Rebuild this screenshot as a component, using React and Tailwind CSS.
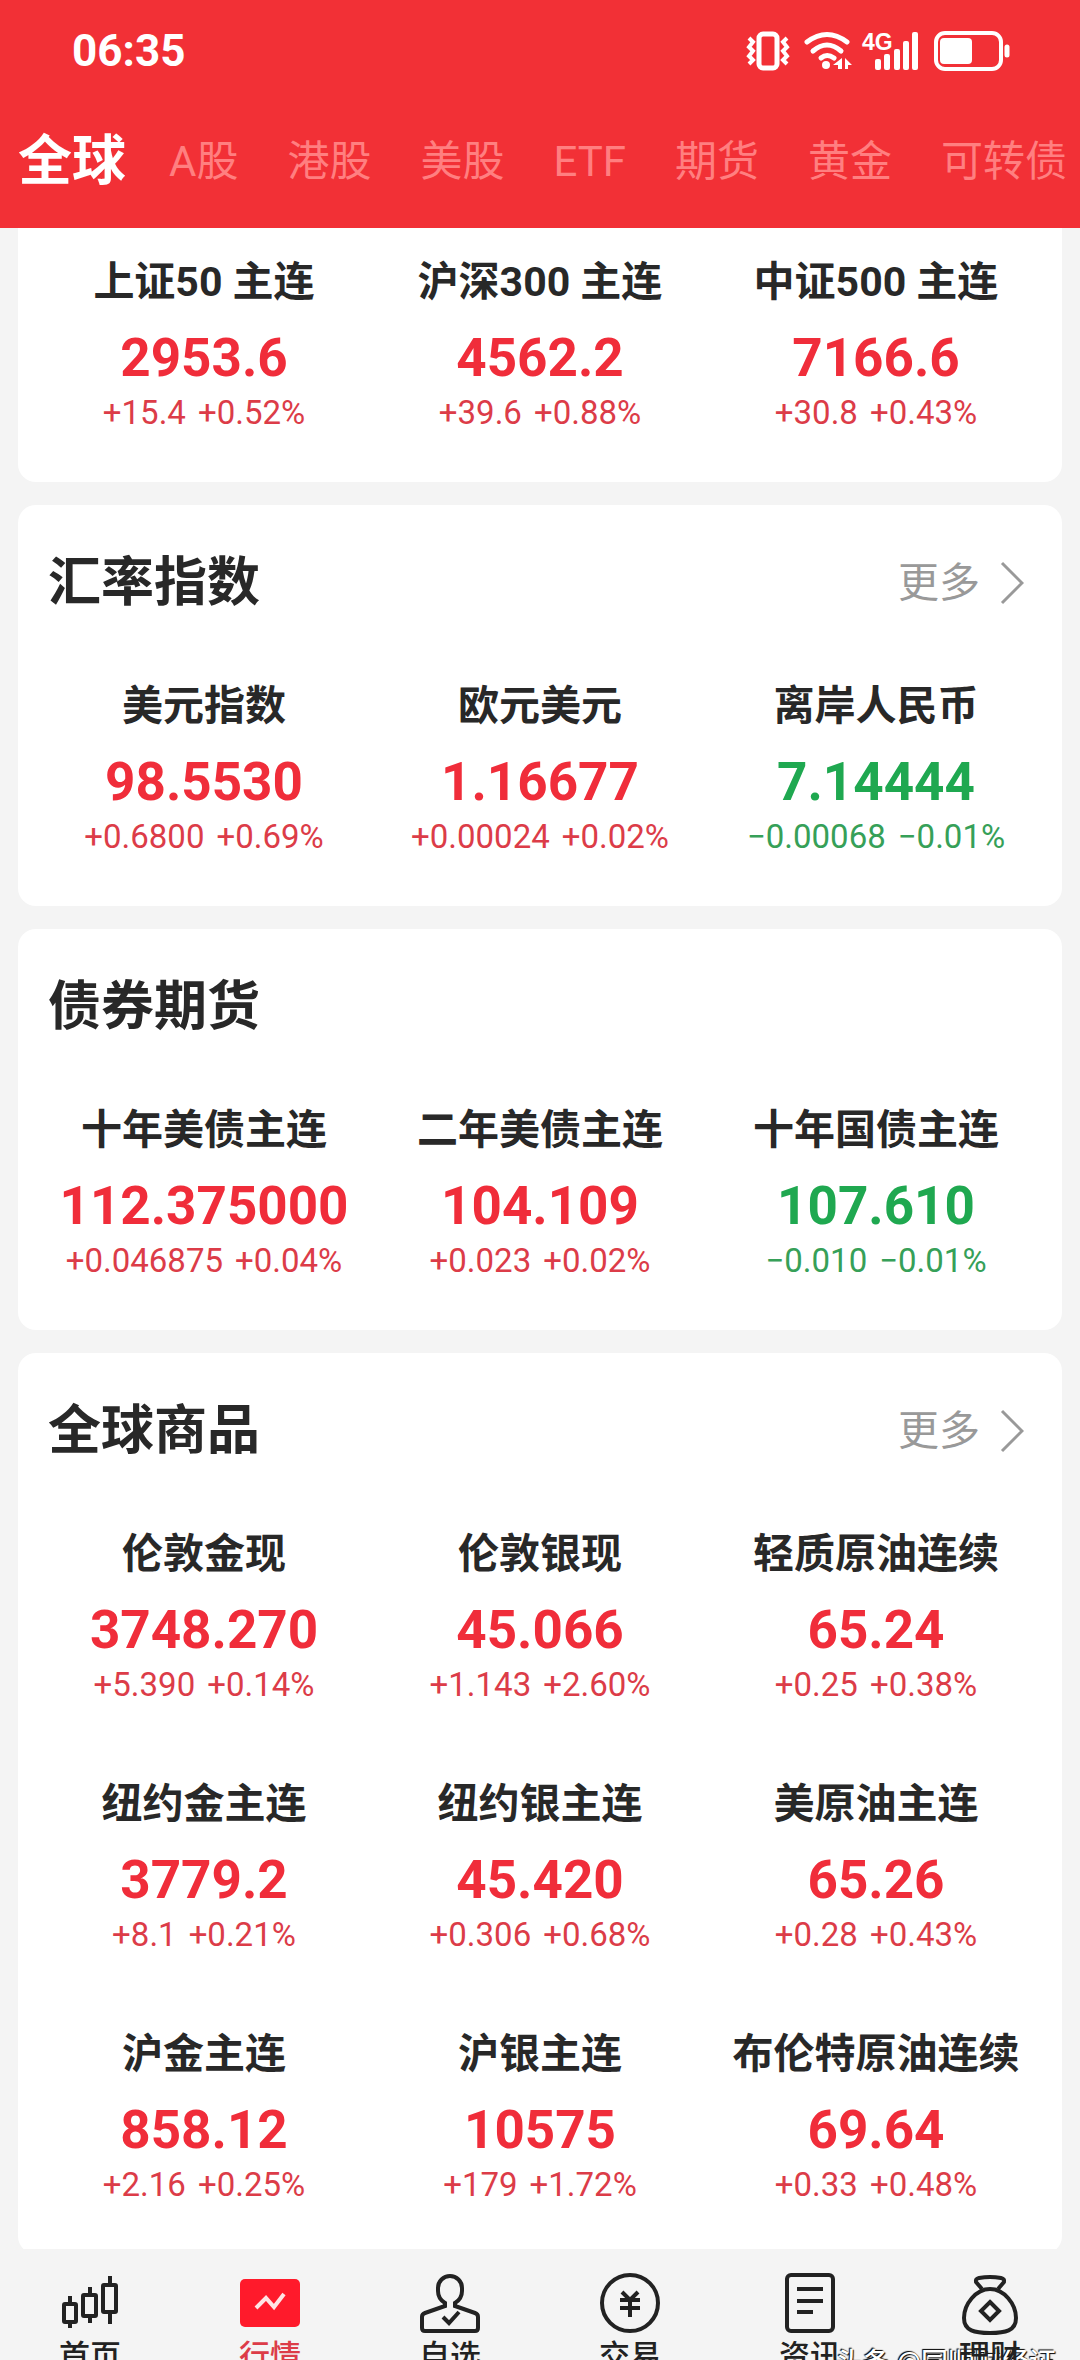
import { clsx } from "clsx";

const tabs = ["全球", "A股", "港股", "美股", "ETF", "期货", "黄金", "可转债"];

const sections = [
    {
        items: [
            { name: "上证50 主连", price: "2953.6", change: "+15.4", percent: "+0.52%" },
            { name: "沪深300 主连", price: "4562.2", change: "+39.6", percent: "+0.88%" },
            { name: "中证500 主连", price: "7166.6", change: "+30.8", percent: "+0.43%" },
        ],
    },
    {
        title: "汇率指数",
        more: true,
        items: [
            { name: "美元指数", price: "98.5530", change: "+0.6800", percent: "+0.69%" },
            { name: "欧元美元", price: "1.16677", change: "+0.00024", percent: "+0.02%" },
            { name: "离岸人民币", price: "7.14444", change: "−0.00068", percent: "−0.01%" },
        ],
    },
    {
        title: "债券期货",
        items: [
            { name: "十年美债主连", price: "112.375000", change: "+0.046875", percent: "+0.04%" },
            { name: "二年美债主连", price: "104.109", change: "+0.023", percent: "+0.02%" },
            { name: "十年国债主连", price: "107.610", change: "−0.010", percent: "−0.01%" },
        ],
    },
    {
        title: "全球商品",
        more: true,
        items: [
            { name: "伦敦金现", price: "3748.270", change: "+5.390", percent: "+0.14%" },
            { name: "伦敦银现", price: "45.066", change: "+1.143", percent: "+2.60%" },
            { name: "轻质原油连续", price: "65.24", change: "+0.25", percent: "+0.38%" },
            { name: "纽约金主连", price: "3779.2", change: "+8.1", percent: "+0.21%" },
            { name: "纽约银主连", price: "45.420", change: "+0.306", percent: "+0.68%" },
            { name: "美原油主连", price: "65.26", change: "+0.28", percent: "+0.43%" },
            { name: "沪金主连", price: "858.12", change: "+2.16", percent: "+0.25%" },
            { name: "沪银主连", price: "10575", change: "+179", percent: "+1.72%" },
            { name: "布伦特原油连续", price: "69.64", change: "+0.33", percent: "+0.48%" },
        ],
    },
];

const StatusBar = () => (
    <div className="flex items-center justify-between pl-[72px] pr-[70px] pt-[21px]">
        <span className="text-[44px] leading-[60px] font-bold">06:35</span>
        <div className="flex items-center gap-3">
            {/* Vibrate */}
            <svg width="46" height="40" viewBox="0 0 46 40" fill="none" stroke="currentColor">
                <rect x="13" y="3" width="18" height="34" rx="4" strokeWidth="5" />
                <path d="M3 7l4 4-4 5 4 4-4 5 4 4-4 4" strokeWidth="4" />
                <path d="M41 7l-4 4 4 5-4 4 4 5-4 4 4 4" strokeWidth="4" />
            </svg>
            {/* Wifi */}
            <svg width="46" height="40" viewBox="0 0 46 40" fill="none" stroke="currentColor" strokeWidth="5" strokeLinecap="round" className="overflow-visible">
                <path d="M3 11Q23 -4 43 11" />
                <path d="M9 20Q23 8 37 20" />
                <path d="M17 27Q23 22 30 27" />
                <circle cx="22" cy="34" r="4" fill="currentColor" stroke="none" />
                <path d="M38 27v11h-4v-4h-5zM41 27l7 7h-4v4h-3z" fill="currentColor" stroke="none" />
            </svg>
            {/* Signal */}
            <svg width="60" height="40" viewBox="0 0 60 40" fill="currentColor" className="overflow-visible">
                <text x="0" y="19" className="font-['Liberation_Sans_Narrow',sans-serif] text-[23px] font-bold">4G</text>
                <rect x="13" y="28" width="6" height="11" rx="2" />
                <rect x="22" y="23" width="6" height="16" rx="2" />
                <rect x="32" y="18" width="6" height="21" rx="2" />
                <rect x="41" y="10" width="6" height="29" rx="2" />
                <rect x="50" y="1" width="6" height="38" rx="2" />
            </svg>
            {/* Battery */}
            <svg width="76" height="40" viewBox="0 0 76 40" fill="none" stroke="currentColor">
                <rect x="2" y="2" width="65" height="36" rx="9" strokeWidth="4" />
                <rect x="6" y="7" width="32" height="26" rx="4" fill="currentColor" stroke="none" />
                <path d="M73 16v8" strokeWidth="5" strokeLinecap="round" />
            </svg>
        </div>
    </div>
);

const QuoteCell = ({ name, price, change, percent }) => {
    const down = change.startsWith("−");

    return (
        <div className="flex flex-col items-center whitespace-nowrap">
            <span className="text-[41px] leading-[60px] font-bold text-[#282828]">{name}</span>
            <span className={clsx("mt-3.5 text-[53px] leading-[64px] font-bold", down ? "text-[#1fa850]" : "text-[#f02d3a]")}>
                {price}
            </span>
            <div className={clsx("mt-0.5 flex gap-3 text-[33px] leading-[42px]", down ? "text-[#36a058]" : "text-[#dc3c48]")}>
                <span>{change}</span>
                <span>{percent}</span>
            </div>
        </div>
    );
};

const Section = ({ title, more, items }) => (
    <section className={clsx("bg-white px-[18px]", title ? "rounded-[18px] pt-[42px]" : "rounded-b-[18px] pt-6")}>
        {title && (
            <div className="mb-[57px] flex items-center justify-between pl-3 pr-5">
                <h2 className="text-[53px] leading-[72px] font-bold text-[#282828]">{title}</h2>
                {more && (
                    <a href="#" className="flex items-center gap-5 text-[41px] leading-[60px] text-[#999]">
                        更多
                        <svg width="24" height="44" viewBox="0 0 24 44" fill="none" stroke="currentColor" strokeWidth="3">
                            <path d="M2 2l20 20L2 42" />
                        </svg>
                    </a>
                )}
            </div>
        )}
        <div className="grid grid-cols-3 gap-y-[68px] pb-12">
            {items.map((item) => (
                <QuoteCell key={item.name} {...item} />
            ))}
        </div>
    </section>
);

const navItems = [
    {
        label: "首页",
        icon: (
            <>
                <rect x="4" y="29" width="12" height="18" rx="1" />
                <path d="M10 21v8M10 47v6" />
                <rect x="23" y="20" width="13" height="21" rx="1" />
                <path d="M30 12v8M30 41v7" />
                <rect x="43" y="10" width="13" height="27" rx="1" />
                <path d="M50 1v9M50 37v12" />
            </>
        ),
    },
    {
        label: "行情",
        active: true,
        icon: (
            <>
                <rect x="0" y="4" width="60" height="48" rx="5" fill="#ff1a2b" stroke="none" />
                <path d="M16 33l10-10 8 9 10-13" stroke="#ffe4e4" />
            </>
        ),
    },
    {
        label: "自选",
        icon: (
            <>
                <path d="M25 28C20 25 18 21 18 16V13a12 12 0 0 1 24 0v3c0 5-2 9-7 12v3l20 7q3 1 3 4v11q0 3-3 3H5q-3 0-3-3V42q0-3 3-4l20-7z" />
                <path d="M23 42l6 6 10-11" />
            </>
        ),
    },
    {
        label: "交易",
        icon: (
            <>
                <circle cx="30" cy="28" r="28" />
                <path d="M22 17l8 8 8-8M20 25h20M20 33h20M30 25v17" />
            </>
        ),
    },
    {
        label: "资讯",
        icon: (
            <>
                <rect x="7" y="0" width="46" height="56" rx="4" />
                <path d="M17 14h26M17 26h26M17 37h16" />
            </>
        ),
    },
    {
        label: "理财",
        icon: (
            <>
                <path d="M22 14L16 7q-1-3 3-4 11-2 22 0 4 1 3 4l-6 7" />
                <path d="M30 14C44 14 56 29 56 43c0 13-11 15-26 15S4 56 4 43c0-14 12-29 26-29z" />
                <path d="M30 27l9 9-9 9-9-9z" />
            </>
        ),
    },
];

const BottomNav = () => (
    <nav className="fixed inset-x-0 bottom-0 h-[111px] overflow-hidden bg-[#f4f4f4]">
        <span className="absolute top-[94px] right-6 text-[27px] leading-10 font-medium whitespace-nowrap text-white [text-shadow:1px_1px_1px_#000,-1px_-1px_1px_#000]">
            头条 @同顺财经证
        </span>
        <div className="relative grid grid-cols-6 pt-[26px]">
            {navItems.map(({ label, icon, active }) => (
                <a key={label} href="#" className={clsx("flex flex-col items-center text-[31px] leading-[44px] font-medium", active ? "text-[#dc3c48]" : "text-[#222]")}>
                    <svg width="60" height="60" viewBox="0 0 60 60" fill="none" stroke="currentColor" strokeWidth="4" className="overflow-visible">
                        {icon}
                    </svg>
                    {label}
                </a>
            ))}
        </div>
    </nav>
);

const App = () => (
    <div className="min-h-screen bg-[#f4f4f4] font-['Roboto','Noto_Sans_CJK_SC',sans-serif]">
        <header className="h-[228px] overflow-hidden bg-[#f23036] text-white">
            <StatusBar />
            <div className="mt-[43px] flex items-center gap-[49px] pl-[18px] whitespace-nowrap">
                {tabs.map((tab, i) => (
                    <button key={tab} type="button" className={i === 0 ? "-mr-1.5 text-[54px] leading-[76px] font-bold" : "text-[42px] leading-[76px] text-[#ff7f80]"}>
                        {tab}
                    </button>
                ))}
            </div>
        </header>
        <main className="flex flex-col gap-[23px] px-[18px]">
            {sections.map((section, i) => (
                <Section key={i} {...section} />
            ))}
        </main>
        <BottomNav />
    </div>
);

export default App;
